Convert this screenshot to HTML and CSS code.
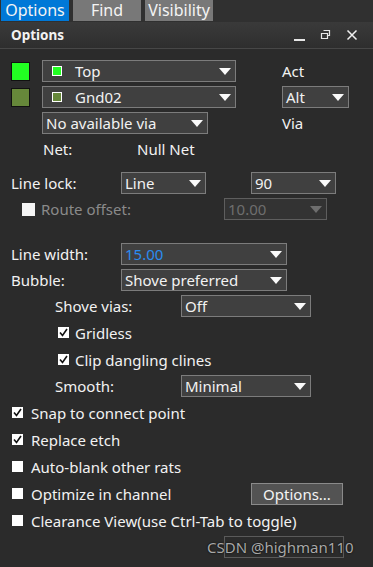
FILE: index.html
```html
<!DOCTYPE html>
<html lang="en">
<head>
    <meta charset="UTF-8">
    <title>Options</title>
    <link rel="stylesheet" href="styles.css">
</head>
<body>
    <div class="tabs">
        <div class="tab active">Options</div>
        <div class="tab">Find</div>
        <div class="tab">Visibility</div>
    </div>

    <div class="titlebar">
        <span class="title">Options</span>
        <div class="win-btns">
            <svg width="12" height="12" viewBox="0 0 12 12"><rect x="0" y="10" width="11" height="2" fill="#e6e6e6"/></svg>
            <svg width="12" height="12" viewBox="0 0 12 12"><path d="M3.5 1.5h6v5h-2M1.5 4.5h6v5h-6z" fill="none" stroke="#e6e6e6" stroke-width="1.2"/></svg>
            <svg width="12" height="12" viewBox="0 0 12 12"><path d="M1.5 1.5l9 9M10.5 1.5l-9 9" stroke="#f0f0f0" stroke-width="1.5"/></svg>
        </div>
    </div>

    <div class="content">
        <div class="row first">
            <span class="swatch bright"></span>
            <div class="select w-layer"><span class="mini bright"></span>Top<i></i></div>
            <span class="side">Act</span>
        </div>
        <div class="row">
            <span class="swatch olive"></span>
            <div class="select w-layer"><span class="mini olive"></span>Gnd02<i></i></div>
            <div class="select w-alt">Alt<i></i></div>
        </div>
        <div class="row">
            <div class="select w-via">No available via<i></i></div>
            <span class="side via">Via</span>
        </div>
        <div class="row net">
            <span class="net-lbl">Net:</span>
            <span>Null Net</span>
        </div>

        <div class="row lock">
            <span class="lbl">Line lock:</span>
            <div class="select w-small">Line<i></i></div>
            <div class="select w-small angle">90<i></i></div>
        </div>
        <div class="row">
            <span class="box big"></span>
            <span class="dim">Route offset:</span>
            <div class="select disabled w-offset">10.00<i></i></div>
        </div>

        <div class="row width">
            <span class="lbl">Line width:</span>
            <div class="select w-wide"><span class="blue">15.00</span><i></i></div>
        </div>
        <div class="row">
            <span class="lbl">Bubble:</span>
            <div class="select w-wide">Shove preferred<i></i></div>
        </div>
        <div class="row">
            <span class="lbl sub">Shove vias:</span>
            <div class="select w-sub">Off<i></i></div>
        </div>
        <div class="row check-row sub-check">
            <svg class="box" width="11" height="11" viewBox="0 0 11 11"><rect width="11" height="11" fill="#fff"/><path d="M2 5.5l2.5 3L9 2" fill="none" stroke="#111" stroke-width="1.6"/></svg>
            <span>Gridless</span>
        </div>
        <div class="row check-row sub-check">
            <svg class="box" width="11" height="11" viewBox="0 0 11 11"><rect width="11" height="11" fill="#fff"/><path d="M2 5.5l2.5 3L9 2" fill="none" stroke="#111" stroke-width="1.6"/></svg>
            <span>Clip dangling clines</span>
        </div>
        <div class="row">
            <span class="lbl sub">Smooth:</span>
            <div class="select w-sub">Minimal<i></i></div>
        </div>

        <div class="row check-row">
            <svg class="box" width="11" height="11" viewBox="0 0 11 11"><rect width="11" height="11" fill="#fff"/><path d="M2 5.5l2.5 3L9 2" fill="none" stroke="#111" stroke-width="1.6"/></svg>
            <span>Snap to connect point</span>
        </div>
        <div class="row check-row">
            <svg class="box" width="11" height="11" viewBox="0 0 11 11"><rect width="11" height="11" fill="#fff"/><path d="M2 5.5l2.5 3L9 2" fill="none" stroke="#111" stroke-width="1.6"/></svg>
            <span>Replace etch</span>
        </div>
        <div class="row check-row">
            <span class="box"></span>
            <span>Auto-blank other rats</span>
        </div>
        <div class="row check-row">
            <span class="box"></span>
            <span class="grow">Optimize in channel</span>
            <button class="btn">Options...</button>
        </div>
        <div class="row check-row">
            <span class="box"></span>
            <span>Clearance View(use Ctrl-Tab to toggle)</span>
        </div>
    </div>

    <div class="watermark">
        <div class="ghost"></div>
        <span class="mark">CSDN @highman110</span>
    </div>
</body>
</html>
```

FILE: styles.css
```css
* {
    margin: 0;
    padding: 0;
    box-sizing: border-box;
}

body {
    font-family: "Noto Sans", "Open Sans", sans-serif;
    font-size: 15px;
    background: #2b2b2b;
    color: #f2f2f2;
    width: 373px;
    height: 567px;
    position: relative;
    overflow: hidden;
}

.tabs {
    display: flex;
    gap: 4px;
    height: 22px;
    background: #303030;
}

.tab {
    width: 68px;
    background: #787878;
    color: #f4f4f4;
    font-size: 16px;
    line-height: 21px;
    text-align: center;
    height: 21px;
}

.tab.active {
    background: #0078d7;
    margin-left: 1px;
}

.titlebar {
    height: 27px;
    display: flex;
    align-items: center;
    justify-content: space-between;
    padding: 0 15px 0 11px;
    background: linear-gradient(#3a3a3a, #2e2e2e);
    border-bottom: 1px solid #474747;
}

.title {
    font-weight: bold;
    font-size: 13.5px;
}

.win-btns {
    display: flex;
    gap: 14px;
    align-items: center;
}

.content {
    display: flex;
    flex-direction: column;
}

.row {
    display: flex;
    align-items: center;
    height: 22px;
    margin-top: 4px;
}

.row.first { margin-top: 11px; }
.row.net { margin-top: 4px; }
.row.lock { margin-top: 12px; }
.row.width { margin-top: 23px; }

.swatch {
    width: 19px;
    height: 19px;
    margin: 0 12px 0 11px;
    border: 1px solid #111;
}

.bright { background: #22ff22; }
.olive { background: #66883a; }

.select {
    position: relative;
    height: 22px;
    background: #404040;
    border: 1px solid #7c7c7c;
    padding-left: 3px;
    line-height: 20px;
    display: flex;
    align-items: center;
    white-space: nowrap;
}

.select i {
    position: absolute;
    right: 4px;
    top: 7px;
    border-left: 6px solid transparent;
    border-right: 6px solid transparent;
    border-top: 7px solid #fafafa;
}

.select.disabled {
    background: #333;
    border-color: #5e5e5e;
    color: #6e6e6e;
}

.select.disabled i {
    border-top-color: #6e6e6e;
}

.mini {
    width: 10px;
    height: 10px;
    border: 1px solid #fff;
    margin: 0 13px 0 6px;
}

.w-layer { width: 194px; }
.w-alt { width: 67px; margin-left: 46px; }
.w-via { width: 166px; margin-left: 42px; }
.w-small { width: 85px; }
.angle { margin-left: 45px; }
.w-offset { width: 103px; }
.w-wide { width: 166px; }
.w-sub { width: 130px; }

.side {
    margin-left: 46px;
}

.side.via {
    margin-left: 74px;
}

.net-lbl {
    margin-left: 43px;
    width: 94px;
}

.lbl {
    width: 121px;
    padding-left: 11px;
}

.lbl.sub {
    width: 181px;
    padding-left: 55px;
}

.dim {
    color: #8a8a8a;
    width: 183px;
}

.blue {
    color: #2a8cf0;
}

.box {
    display: block;
    width: 11px;
    height: 11px;
    background: #fff;
    margin: 0 8px 0 12px;
    flex-shrink: 0;
}

.box.big {
    width: 13px;
    height: 13px;
    margin: 0 6px 0 22px;
    background: #f4f4f4;
}

.check-row {
    height: 23px;
}

.sub-check .box {
    margin-left: 58px;
    margin-right: 6px;
}

.grow {
    width: 220px;
}

.btn {
    width: 92px;
    height: 22px;
    background: #535353;
    border: 1px solid #8a8a8a;
    color: #f4f4f4;
    font-family: inherit;
    font-size: 15px;
}

.watermark {
    position: absolute;
    left: 207px;
    top: 536px;
    width: 150px;
    height: 22px;
}

.ghost {
    position: absolute;
    left: 17px;
    top: 0;
    width: 120px;
    height: 22px;
    border: 1px solid #5a5a5a;
}

.mark {
    position: absolute;
    left: 0;
    top: 0;
    font-size: 15px;
    line-height: 22px;
    color: #a8a8a8;
    text-shadow: 0 0 2px #000;
    white-space: nowrap;
}
```
